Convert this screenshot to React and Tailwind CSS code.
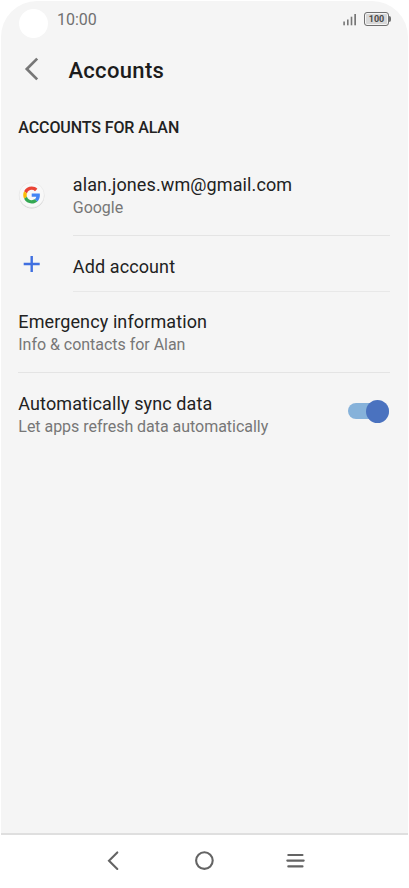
function StatusBar() {
  return (
    <div className="flex h-[38px] shrink-0 items-start pl-[18px] pr-[17px]">
      <div className="mt-2 size-[29px] rounded-full bg-white" />
      <span className="ml-[9px] mt-[9px] text-[16px] leading-5 text-[#707070]">10:00</span>
      <svg className="ml-auto mt-[12px]" width="14" height="13" viewBox="0 0 14 13" fill="#777777">
        <rect x="0.3" y="8.5" width="1.6" height="3.8" />
        <rect x="4" y="6.5" width="1.6" height="5.8" />
        <rect x="7.7" y="3.7" width="1.6" height="8.6" />
        <rect x="11.3" y="1" width="1.7" height="11.3" />
      </svg>
      <div className="ml-[7px] mt-[11px] flex items-center">
        <div className="flex h-[14px] w-[25px] items-center justify-center rounded-[3px] border border-[#707070] bg-[#d8d8d8] text-[9px] font-bold leading-none text-[#4a4a4a] shadow-[inset_0_0_0_1px_#f5f5f5]">
          100
        </div>
        <div className="h-[6px] w-[2px] rounded-r-sm bg-[#707070]" />
      </div>
    </div>
  );
}

function GoogleIcon() {
  return (
    <svg width="28" height="28" viewBox="0 0 28 28">
      <circle cx="13.7" cy="14.8" r="12.6" fill="#cfcfcf" />
      <circle cx="13.7" cy="14" r="12.6" fill="#f8f8f8" stroke="#e6e6e6" strokeWidth="0.6" />
      <g transform="translate(5.2 5.5) scale(0.355)">
        <path fill="#EA4335" d="M24 9.5c3.54 0 6.71 1.22 9.21 3.6l6.85-6.85C35.9 2.38 30.47 0 24 0 14.62 0 6.51 5.38 2.56 13.22l7.98 6.19C12.43 13.72 17.74 9.5 24 9.5z" />
        <path fill="#4285F4" d="M46.98 24.55c0-1.57-.15-3.09-.38-4.55H24v9.02h12.94c-.58 2.96-2.26 5.48-4.78 7.18l7.73 6c4.51-4.18 7.09-10.36 7.09-17.65z" />
        <path fill="#FBBC05" d="M10.53 28.59c-.48-1.45-.76-2.99-.76-4.59s.27-3.14.76-4.59l-7.98-6.19C.92 16.46 0 20.12 0 24c0 3.88.92 7.54 2.56 10.78l7.97-6.19z" />
        <path fill="#34A853" d="M24 48c6.48 0 11.93-2.13 15.89-5.81l-7.73-6c-2.15 1.45-4.92 2.3-8.16 2.3-6.26 0-11.57-4.22-13.47-9.91l-7.98 6.19C6.51 42.62 14.62 48 24 48z" />
      </g>
    </svg>
  );
}

function Label({ title, detail }) {
  return (
    <div className="flex flex-col">
      <span className="text-[18px] leading-6 tracking-[0.11px] text-[#222222]">{title}</span>
      {detail && <span className="text-[16px] leading-[22px] tracking-[-0.03px] text-[#777777]">{detail}</span>}
    </div>
  );
}

export default function App() {
  return (
    <div className="flex h-[888px] w-[409px] flex-col bg-white px-px pt-px font-[Roboto,sans-serif] whitespace-nowrap">
      <main className="flex h-[832px] shrink-0 flex-col rounded-t-[36px] bg-[#f5f5f5]">
        <StatusBar />
        <header className="flex h-[61px] shrink-0 items-center pl-[23px]">
          <svg className="-mt-px" width="16" height="24" viewBox="0 0 16 24" fill="none" stroke="#777777" strokeWidth="2.7">
            <path d="M13.2 1.6 2.8 12l10.4 10.4" />
          </svg>
          <h1 className="ml-[28.4px] mt-[2px] text-[22px] font-medium leading-7 tracking-[0.33px] text-[#1c1c1c]">Accounts</h1>
        </header>
        <h2 className="mt-[18px] h-5 shrink-0 pl-[17.3px] text-[16px] font-medium leading-5 tracking-[-0.1px] text-[#222222]">ACCOUNTS FOR ALAN</h2>
        <section className="mt-px flex flex-col pl-[17.3px] pr-[18px]">
          <div className="flex h-[97px]">
            <div className="mt-[42px] w-[54.5px]"><GoogleIcon /></div>
            <div className="flex flex-1 flex-col border-b border-[#e4e4e4] pt-[34px]">
              <Label title="alan.jones.wm@gmail.com" detail="Google" />
            </div>
          </div>
          <div className="flex h-[56px]">
            <div className="w-[54.5px] pl-[5px] pt-[19px]">
              <svg width="18" height="18" viewBox="0 0 18 18" stroke="#3f6fe0" strokeWidth="2.4">
                <path d="M8.7 1v16M.7 9h16" />
              </svg>
            </div>
            <div className="flex flex-1 flex-col border-b border-[#e8e8e8] pt-[19px]">
              <Label title="Add account" />
            </div>
          </div>
          <div className="h-[81px] border-b border-[#e4e4e4] pt-[18px]">
            <Label title="Emergency information" detail="Info & contacts for Alan" />
          </div>
          <div className="flex h-[80px] justify-between pt-[19px]">
            <Label title="Automatically sync data" detail="Let apps refresh data automatically" />
            <button role="switch" aria-checked="true" className="mr-[1.3px] mt-[11px] flex h-4 w-[41px] items-center justify-end rounded-full bg-[#86b2da]">
              <span className="size-[23px] rounded-full bg-[#4a72bf]" />
            </button>
          </div>
        </section>
      </main>
      <nav className="flex h-[55px] border-t-2 border-[#dfdfdf] bg-white pl-[105px] pt-[15px]">
        <svg width="200" height="22" viewBox="0 0 200 22" fill="none" stroke="#646464" strokeWidth="2.1" strokeLinecap="round">
          <path d="M11.3 2.4 3 10.7l8.3 8.3" />
          <circle cx="98.4" cy="10.6" r="8.3" />
          <path d="M182.3 5h14.2M181.3 10.6h16.4M182.3 16.4h14.2" />
        </svg>
      </nav>
    </div>
  );
}
